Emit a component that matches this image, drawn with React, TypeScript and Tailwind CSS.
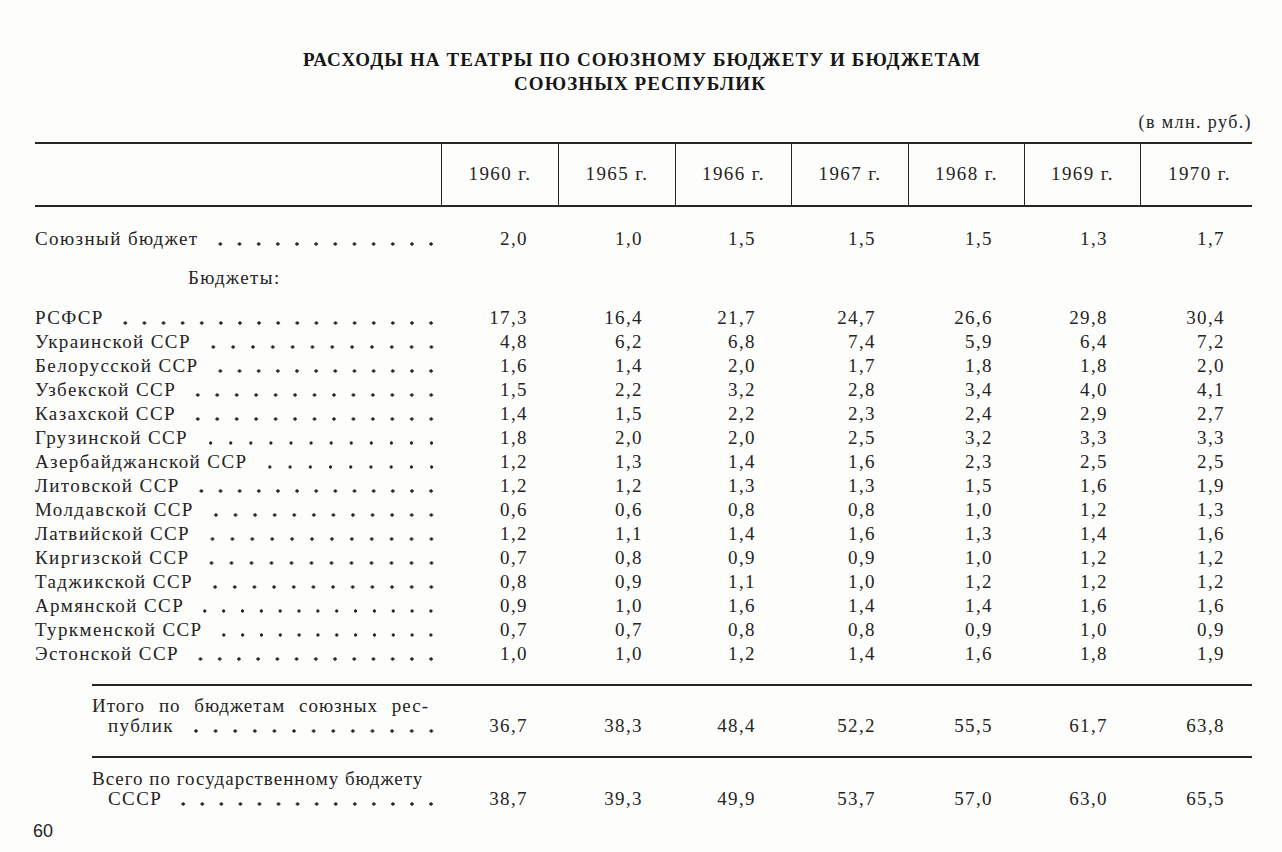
import React from 'react'

const years = ['1960', '1965', '1966', '1967', '1968', '1969', '1970']

// right padding per year column, to sit the figures where the print has them
const padR = ['pr-[30px]', 'pr-[32px]', 'pr-[35px]', 'pr-[32px]', 'pr-[31px]', 'pr-[32px]', 'pr-[27px]']

const grid = 'grid grid-cols-[406px_117px_117px_116px_117px_116px_116px_112px]'
const gridSub = 'grid grid-cols-[349px_117px_117px_116px_117px_116px_116px_112px]'

const republics: [string, string[]][] = [
  ['РСФСР', ['17,3', '16,4', '21,7', '24,7', '26,6', '29,8', '30,4']],
  ['Украинской ССР', ['4,8', '6,2', '6,8', '7,4', '5,9', '6,4', '7,2']],
  ['Белорусской ССР', ['1,6', '1,4', '2,0', '1,7', '1,8', '1,8', '2,0']],
  ['Узбекской ССР', ['1,5', '2,2', '3,2', '2,8', '3,4', '4,0', '4,1']],
  ['Казахской ССР', ['1,4', '1,5', '2,2', '2,3', '2,4', '2,9', '2,7']],
  ['Грузинской ССР', ['1,8', '2,0', '2,0', '2,5', '3,2', '3,3', '3,3']],
  ['Азербайджанской ССР', ['1,2', '1,3', '1,4', '1,6', '2,3', '2,5', '2,5']],
  ['Литовской ССР', ['1,2', '1,2', '1,3', '1,3', '1,5', '1,6', '1,9']],
  ['Молдавской ССР', ['0,6', '0,6', '0,8', '0,8', '1,0', '1,2', '1,3']],
  ['Латвийской ССР', ['1,2', '1,1', '1,4', '1,6', '1,3', '1,4', '1,6']],
  ['Киргизской ССР', ['0,7', '0,8', '0,9', '0,9', '1,0', '1,2', '1,2']],
  ['Таджикской ССР', ['0,8', '0,9', '1,1', '1,0', '1,2', '1,2', '1,2']],
  ['Армянской ССР', ['0,9', '1,0', '1,6', '1,4', '1,4', '1,6', '1,6']],
  ['Туркменской ССР', ['0,7', '0,7', '0,8', '0,8', '0,9', '1,0', '0,9']],
  ['Эстонской ССР', ['1,0', '1,0', '1,2', '1,4', '1,6', '1,8', '1,9']],
]

const union = ['2,0', '1,0', '1,5', '1,5', '1,5', '1,3', '1,7']
const subtotal = ['36,7', '38,3', '48,4', '52,2', '55,5', '61,7', '63,8']
const total = ['38,7', '39,3', '49,9', '53,7', '57,0', '63,0', '65,5']

// dotted leader, drawn as a repeated dot so whole dots fill the gap
function Dots({ tall }: { tall?: boolean }) {
  return tall ? (
    <span className="flex-1 min-w-0 ml-[12px] bg-[radial-gradient(circle_at_50%_17px,#262626_1.4px,transparent_1.9px)] bg-[length:19.5px_24px] bg-right [background-repeat:round_no-repeat]" />
  ) : (
    <span className="flex-1 min-w-0 ml-[12px] -mr-[12px] bg-[radial-gradient(circle_at_50%_15px,#262626_1.4px,transparent_1.9px)] bg-[length:19.5px_20px] bg-right [background-repeat:round_no-repeat]" />
  )
}

function Figures({ values }: { values: string[] }) {
  return (
    <>
      {values.map((v, i) => (
        <div key={i} className={`text-right ${padR[i]}`}>
          {v}
        </div>
      ))}
    </>
  )
}

function Row({ label, values }: { label: string; values: string[] }) {
  return (
    <div className={`${grid} h-[24px] leading-[24px]`}>
      <div className="flex">
        <span className="whitespace-nowrap">{label}</span>
        <Dots tall />
      </div>
      <Figures values={values} />
    </div>
  )
}

function Summary({ first, second, values, justify }: { first: string; second: string; values: string[]; justify?: boolean }) {
  return (
    <div className={`${gridSub} items-end leading-[20px]`}>
      <div className="pr-[12px]">
        <div className={`whitespace-nowrap tracking-[1px] ${justify ? 'text-justify [text-align-last:justify]' : ''}`}>{first}</div>
        <div className="flex pl-[16px] h-[20px]">
          <span className="whitespace-nowrap">{second}</span>
          <Dots />
        </div>
      </div>
      <Figures values={values} />
    </div>
  )
}

export default function App() {
  return (
    <div className="w-[1282px] h-[852px] overflow-hidden bg-[#fdfdfb] text-[#242424] font-['Liberation_Serif',serif] text-[19px] tracking-[1.4px]">
      {/* title */}
      <div className="pt-[48px] text-center font-bold text-[19px] tracking-[1.1px] leading-[24px] text-[#161616]">
        <div className="pl-[2px]">РАСХОДЫ НА ТЕАТРЫ ПО СОЮЗНОМУ БЮДЖЕТУ И БЮДЖЕТАМ</div>
        <div className="pr-[2px]">СОЮЗНЫХ РЕСПУБЛИК</div>
      </div>

      <div className="pl-[35px] pr-[30px]">
        <div className="mt-[14px] text-right leading-[24px] text-[18px]">(в млн. руб.)</div>

        {/* header */}
        <div className={`${grid} mt-[8px] h-[65px] border-t-[2px] border-b-[2px] border-[#262626]`}>
          <div />
          {years.map((y, i) => (
            <div
              key={y}
              className={`flex items-center justify-center border-l-[1.5px] border-[#262626] ${i === 6 ? 'pl-[6px]' : ''}`}
            >
              {y} г.
            </div>
          ))}
        </div>

        {/* body */}
        <div className="pt-[20px]">
          <Row label="Союзный бюджет" values={union} />
          <div className="mt-[15px] h-[24px] leading-[24px] pl-[153px]">Бюджеты:</div>
          <div className="mt-[16px]">
            {republics.map(([name, vals]) => (
              <Row key={name} label={name} values={vals} />
            ))}
          </div>
        </div>

        {/* subtotal */}
        <div className="ml-[57px] mt-[18px] border-t-[2px] border-[#262626] pt-[10px]">
          <Summary first="Итого по бюджетам союзных рес-" second="публик" values={subtotal} justify />
        </div>

        {/* total */}
        <div className="ml-[57px] mt-[20px] border-t-[2px] border-[#262626] pt-[11px]">
          <Summary first="Всего по государственному бюджету" second="СССР" values={total} />
        </div>
      </div>

      <div className="pl-[33px] mt-[10px] leading-[24px] font-['Liberation_Sans',sans-serif] text-[18px] tracking-normal">60</div>
    </div>
  )
}
